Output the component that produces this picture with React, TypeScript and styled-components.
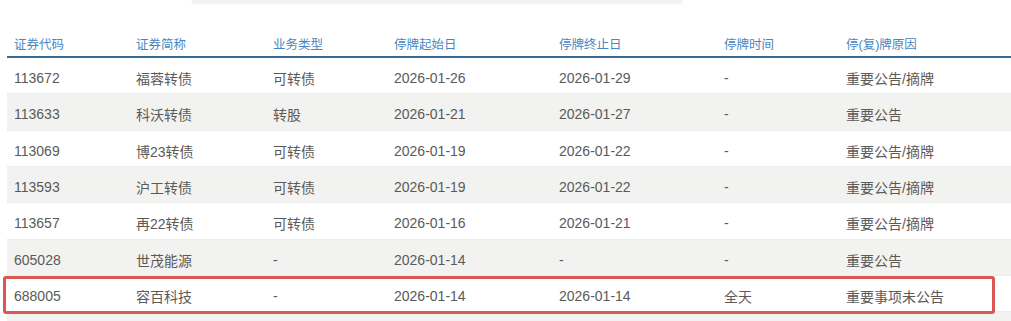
import React from 'react';
import styled, { createGlobalStyle } from 'styled-components';

const GlobalStyle = createGlobalStyle`
  html, body {
    margin: 0;
    padding: 0;
    background: #ffffff;
  }
  body {
    font-family: "Liberation Sans", "Noto Sans CJK SC", sans-serif;
    overflow: hidden;
  }
`;

type Suspension = {
  code: string;
  name: string;
  kind: string;
  start: string;
  end: string;
  time: string;
  reason: string;
  marked?: boolean;
};

const columns = ['证券代码', '证券简称', '业务类型', '停牌起始日', '停牌终止日', '停牌时间', '停(复)牌原因'];

const rows: Suspension[] = [
  { code: '113672', name: '福蓉转债', kind: '可转债', start: '2026-01-26', end: '2026-01-29', time: '-', reason: '重要公告/摘牌' },
  { code: '113633', name: '科沃转债', kind: '转股', start: '2026-01-21', end: '2026-01-27', time: '-', reason: '重要公告' },
  { code: '113069', name: '博23转债', kind: '可转债', start: '2026-01-19', end: '2026-01-22', time: '-', reason: '重要公告/摘牌' },
  { code: '113593', name: '沪工转债', kind: '可转债', start: '2026-01-19', end: '2026-01-22', time: '-', reason: '重要公告/摘牌' },
  { code: '113657', name: '再22转债', kind: '可转债', start: '2026-01-16', end: '2026-01-21', time: '-', reason: '重要公告/摘牌' },
  { code: '605028', name: '世茂能源', kind: '-', start: '2026-01-14', end: '-', time: '-', reason: '重要公告' },
  { code: '688005', name: '容百科技', kind: '-', start: '2026-01-14', end: '2026-01-14', time: '全天', reason: '重要事项未公告', marked: true },
];

const App = () => (
  <Page>
    <GlobalStyle />
    <SearchShadow />
    <Table>
      <HeadRow>
        {columns.map((c) => (
          <HeadCell key={c}>{c}</HeadCell>
        ))}
      </HeadRow>
      {rows.map((r, i) => (
        <Row key={r.code} $striped={i % 2 === 1}>
          <Cell>{r.code}</Cell>
          <Cell>{r.name}</Cell>
          <Cell>{r.kind}</Cell>
          <Cell>{r.start}</Cell>
          <Cell>{r.end}</Cell>
          <Cell>{r.time}</Cell>
          <Cell>{r.reason}</Cell>
          {r.marked && <Highlight />}
        </Row>
      ))}
      <Row $striped />
    </Table>
  </Page>
);

const Page = styled.div`
  width: 1011px;
  height: 321px;
  overflow: hidden;
  background: #fff;
`;

const SearchShadow = styled.div`
  margin-left: 192px;
  width: 490px;
  height: 3px;
  background: #f1f1f1;
  box-shadow: 0 1px 3px rgba(0, 0, 0, 0.06);
`;

const Table = styled.div`
  margin-top: 27px;
  margin-left: 7px;
  width: 1004px;
`;

const grid = `
  display: grid;
  grid-template-columns: 122px 137px 121px 165px 165px 122px 1fr;
  padding-left: 7px;
  box-sizing: border-box;
`;

const HeadRow = styled.div`
  ${grid}
  height: 28px;
  align-items: center;
  border-bottom: 2px solid #3a6a90;
`;

const HeadCell = styled.div`
  font-size: 12.5px;
  color: #4a86c0;
  white-space: nowrap;
`;

const Row = styled.div<{ $striped?: boolean }>`
  ${grid}
  position: relative;
  height: 36.33px;
  padding-top: 5px;
  align-items: center;
  background: ${(p) => (p.$striped ? '#f2f2f0' : '#ffffff')};
  border-bottom: 1px solid #ececea;
`;

const Cell = styled.div`
  font-size: 14px;
  color: #5a5a5a;
  white-space: nowrap;
`;

const Highlight = styled.div`
  position: absolute;
  z-index: 2;
  left: -4px;
  right: 16px;
  top: 0;
  height: 38px;
  box-sizing: border-box;
  border: 3px solid #dc5656;
  border-radius: 3px;
  pointer-events: none;
`;

export default App;
